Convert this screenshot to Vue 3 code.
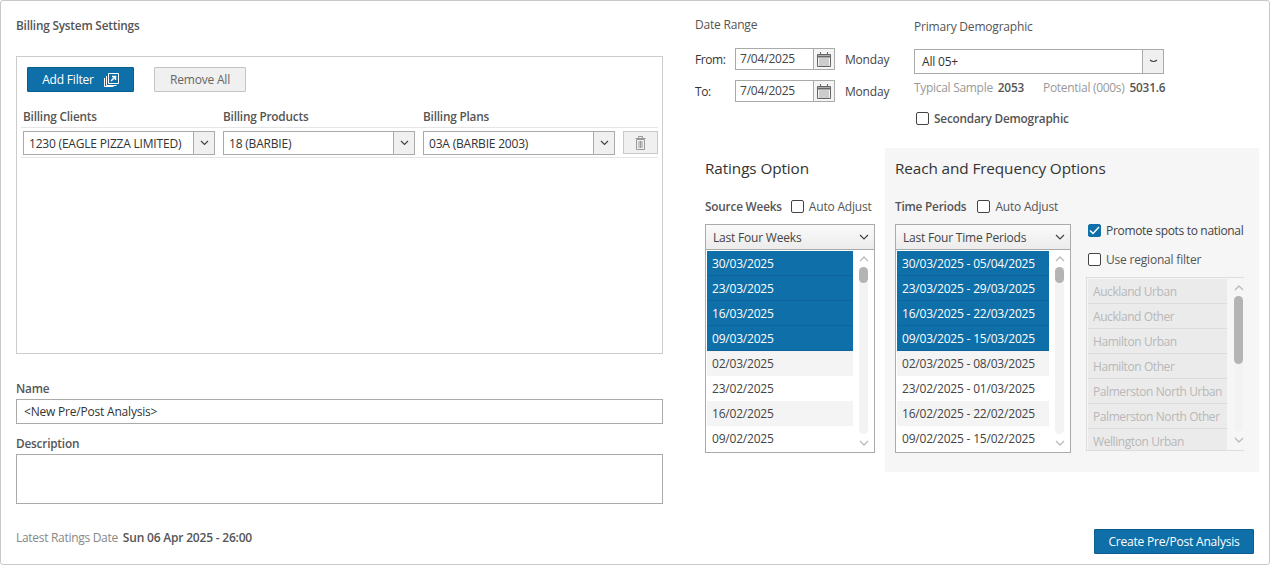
<script setup>
const filterCols = [
  { label: 'Billing Clients', value: '1230 (EAGLE PIZZA LIMITED)' },
  { label: 'Billing Products', value: '18 (BARBIE)' },
  { label: 'Billing Plans', value: '03A (BARBIE 2003)' },
]

const weeks = ['30/03/2025', '23/03/2025', '16/03/2025', '09/03/2025', '02/03/2025', '23/02/2025', '16/02/2025', '09/02/2025']

const periods = [
  '30/03/2025 - 05/04/2025',
  '23/03/2025 - 29/03/2025',
  '16/03/2025 - 22/03/2025',
  '09/03/2025 - 15/03/2025',
  '02/03/2025 - 08/03/2025',
  '23/02/2025 - 01/03/2025',
  '16/02/2025 - 22/02/2025',
  '09/02/2025 - 15/02/2025',
]

const regions = ['Auckland Urban', 'Auckland Other', 'Hamilton Urban', 'Hamilton Other', 'Palmerston North Urban', 'Palmerston North Other', 'Wellington Urban']

const dates = [
  { label: 'From:', value: '7/04/2025' },
  { label: 'To:', value: '7/04/2025' },
]
</script>

<template>
  <div class="page">
    <section class="left">
      <h2 class="title">Billing System Settings</h2>

      <div class="filter-box">
        <div class="filter-actions">
          <button class="btn btn-primary add-btn">
            Add Filter
            <svg width="15" height="14" viewBox="0 0 15 14" fill="none" stroke="#fff">
              <path d="M4.500 .5h10v10h-10z" />
              <path d="M2.500 3v9.500h10" />
              <path d="M.5 5v8.500h9" />
              <path d="M7 8l4-4M8 3.500h3.500V7" stroke-width="1.500" />
            </svg>
          </button>
          <button class="btn btn-muted">Remove All</button>
        </div>
        <div class="filter-labels">
          <div v-for="col in filterCols" :key="col.label" class="filter-label">{{ col.label }}</div>
        </div>
        <div class="filter-row">
          <div v-for="col in filterCols" :key="col.label" class="select filter-select">
            <span class="select-value">{{ col.value }}</span>
            <span class="select-arrow">
              <svg width="9" height="6" viewBox="0 0 9 6" fill="none" stroke="#444" stroke-width="1.200"><path d="M1 1l3.500 3.500L8 1" /></svg>
            </span>
          </div>
          <button class="trash-btn" aria-label="Delete">
            <svg width="11" height="14" viewBox="0 0 11 14" fill="none" stroke="#999">
              <path d="M1.500 3.500h8v10h-8zM.5 2.500h10M3.500 2V.5h4V2M4 5v7M5.500 5v7M7 5v7" />
            </svg>
          </button>
        </div>
      </div>

      <label class="field-label name-label">Name</label>
      <div class="text-input">&lt;New Pre/Post Analysis&gt;</div>
      <label class="field-label desc-label">Description</label>
      <div class="text-area"></div>

      <div class="latest">
        <span>Latest Ratings Date</span>
        <b>Sun 06 Apr 2025 - 26:00</b>
      </div>
    </section>

    <section class="right">
      <div class="top-row">
        <div class="date-range">
          <div class="plain-label">Date Range</div>
          <div v-for="d in dates" :key="d.label" class="date-row">
            <span class="date-label">{{ d.label }}</span>
            <div class="date-input">
              <span class="date-value">{{ d.value }}</span>
              <span class="date-icon">
                <svg width="14" height="15" viewBox="0 0 14 15" fill="none" stroke="#666">
                  <path d="M.5 2.500h13v12H.5z" />
                  <path d="M1 4.500h12" stroke-width="2" />
                  <path d="M3.500 0v3M10.500 0v3" />
                  <path d="M2.500 7h9M2.500 9h9M2.500 11h9M2.500 13h9" stroke-dasharray="1 1" stroke="#555" />
                </svg>
              </span>
            </div>
            <span class="weekday">Monday</span>
          </div>
        </div>

        <div class="demo">
          <div class="plain-label demo-title">Primary Demographic</div>
          <div class="select demo-select">
            <span class="select-value">All 05+</span>
            <span class="select-arrow">
              <svg width="9" height="5" viewBox="0 0 9 5" fill="none" stroke="#444" stroke-width="1.200"><path d="M1 1q3.500 3 7 0" /></svg>
            </span>
          </div>
          <div class="stats">
            <span class="stat-name">Typical Sample</span><b class="stat-val">2053</b>
            <span class="stat-name stat-second">Potential (000s)</span><b class="stat-val">5031.6</b>
          </div>
          <label class="check secondary">
            <span class="box"></span>
            <b>Secondary Demographic</b>
          </label>
        </div>
      </div>

      <div class="options">
        <div class="ratings">
          <h3 class="heading">Ratings Option</h3>
          <div class="list-head">
            <span class="list-title">Source Weeks</span>
            <label class="check"><span class="box"></span>Auto Adjust</label>
          </div>
          <div class="list-wrap weeks">
            <div class="list-drop">
              Last Four Weeks
              <svg width="10" height="6" viewBox="0 0 10 6" fill="none" stroke="#444" stroke-width="1.200"><path d="M1 1l4 4 4-4" /></svg>
            </div>
            <div class="list-body">
              <div class="rows">
                <div v-for="(w, i) in weeks" :key="w" class="row" :class="{ selected: i < 4, odd: i % 2 === 0 }">{{ w }}</div>
              </div>
              <div class="scroll">
                <svg class="scroll-chev" width="10" height="6" viewBox="0 0 10 6" fill="none" stroke="#bbb" stroke-width="1.300"><path d="M1 5l4-4 4 4" /></svg>
                <div class="track"><div class="thumb"></div></div>
                <svg class="scroll-chev" width="10" height="6" viewBox="0 0 10 6" fill="none" stroke="#bbb" stroke-width="1.300"><path d="M1 1l4 4 4-4" /></svg>
              </div>
            </div>
          </div>
        </div>

        <div class="reach">
          <h3 class="heading">Reach and Frequency Options</h3>
          <div class="reach-cols">
            <div>
              <div class="list-head">
                <span class="list-title">Time Periods</span>
                <label class="check"><span class="box"></span>Auto Adjust</label>
              </div>
              <div class="list-wrap periods">
                <div class="list-drop">
                  Last Four Time Periods
                  <svg width="10" height="6" viewBox="0 0 10 6" fill="none" stroke="#444" stroke-width="1.200"><path d="M1 1l4 4 4-4" /></svg>
                </div>
                <div class="list-body">
                  <div class="rows">
                    <div v-for="(p, i) in periods" :key="p" class="row" :class="{ selected: i < 4, odd: i % 2 === 0 }">{{ p }}</div>
                  </div>
                  <div class="scroll">
                    <svg class="scroll-chev" width="10" height="6" viewBox="0 0 10 6" fill="none" stroke="#bbb" stroke-width="1.300"><path d="M1 5l4-4 4 4" /></svg>
                    <div class="track"><div class="thumb"></div></div>
                    <svg class="scroll-chev" width="10" height="6" viewBox="0 0 10 6" fill="none" stroke="#bbb" stroke-width="1.300"><path d="M1 1l4 4 4-4" /></svg>
                  </div>
                </div>
              </div>
            </div>

            <div class="regional">
              <label class="check promote">
                <span class="box checked">
                  <svg width="11" height="9" viewBox="0 0 11 9" fill="none" stroke="#fff" stroke-width="1.500"><path d="M1 4.500l3 3 6-6.500" /></svg>
                </span>
                Promote spots to national
              </label>
              <label class="check use-filter"><span class="box"></span>Use regional filter</label>
              <div class="region-list">
                <div class="region-rows">
                  <div v-for="r in regions" :key="r" class="region">{{ r }}</div>
                </div>
                <div class="scroll region-scroll">
                  <svg class="scroll-chev" width="10" height="6" viewBox="0 0 10 6" fill="none" stroke="#bbb" stroke-width="1.300"><path d="M1 5l4-4 4 4" /></svg>
                  <div class="track"><div class="thumb big"></div></div>
                  <svg class="scroll-chev" width="10" height="6" viewBox="0 0 10 6" fill="none" stroke="#bbb" stroke-width="1.300"><path d="M1 1l4 4 4-4" /></svg>
                </div>
              </div>
            </div>
          </div>
        </div>
      </div>

      <div class="bottom">
        <button class="btn btn-primary create-btn">Create Pre/Post Analysis</button>
      </div>
    </section>
  </div>
</template>

<style scoped>
.page {
  box-sizing: border-box;
  display: flex;
  width: 1270px;
  height: 565px;
  border: 1px solid #c8c8c8;
  border-radius: 3px;
  background: #fff;
  color: #444;
  font-family: "Open Sans", "Noto Sans", "Liberation Sans", sans-serif;
  font-size: 12px;
  letter-spacing: -0.200px;
  overflow: hidden;
}

.left {
  width: 647px;
  margin-left: 15px;
}

.title {
  margin: 16px 0 0;
  height: 39px;
  font-size: 11.800px;
  line-height: 16px;
  font-weight: 600;
  color: #555;
}

.filter-box {
  box-sizing: border-box;
  height: 298px;
  border: 1px solid #ccc;
  padding: 10px 4px 0;
}

.filter-actions {
  display: flex;
  gap: 20px;
  padding-left: 6px;
}

.btn {
  box-sizing: border-box;
  height: 25px;
  font: inherit;
  letter-spacing: inherit;
  border-radius: 1px;
  padding: 0;
}

.btn-primary {
  background: #0f6fa9;
  border: 1px solid #0b5c8e;
  color: #fff;
}

.add-btn {
  display: flex;
  align-items: center;
  justify-content: center;
  gap: 10px;
  width: 107px;
}

.btn-muted {
  width: 92px;
  background: #f0f0f0;
  border: 1px solid #c4c4c4;
  color: #666;
}

.filter-labels {
  display: flex;
  gap: 8px;
  height: 36px;
  padding: 16px 0 0 2px;
  box-sizing: border-box;
  border-bottom: 1px solid #e6e6e6;
}

.filter-label {
  width: 192px;
  font-size: 11.800px;
  font-weight: 600;
  color: #555;
  line-height: 16px;
}

.filter-row {
  box-sizing: border-box;
  display: flex;
  align-items: flex-start;
  gap: 8px;
  height: 30px;
  padding: 3px 0 0 2px;
  border-bottom: 1px solid #e6e6e6;
}

.select {
  box-sizing: border-box;
  display: flex;
  align-items: stretch;
  height: 25px;
  border: 1px solid #aaa;
  background: #fff;
  color: #333;
}

.filter-select {
  width: 192px;
  height: 24px;
}

.select-value {
  flex: 1;
  padding-left: 5px;
  line-height: 23px;
  white-space: nowrap;
}

.select-arrow {
  display: flex;
  align-items: center;
  justify-content: center;
  width: 20px;
  border-left: 1px solid #aaa;
  background: #f0f0f0;
}

.trash-btn {
  box-sizing: border-box;
  display: flex;
  align-items: center;
  justify-content: center;
  width: 35px;
  height: 23px;
  padding: 0;
  background: #f0f0f0;
  border: 1px solid #c8c8c8;
}

.field-label {
  display: block;
  font-size: 11.800px;
  font-weight: 600;
  color: #555;
  line-height: 16px;
}

.name-label {
  margin-top: 26px;
}

.desc-label {
  margin-top: 11px;
}

.text-input {
  box-sizing: border-box;
  height: 25px;
  margin-top: 3px;
  padding-left: 7px;
  border: 1px solid #aaa;
  line-height: 23px;
  color: #333;
}

.text-area {
  box-sizing: border-box;
  height: 50px;
  margin-top: 3px;
  border: 1px solid #aaa;
}

.latest {
  display: flex;
  gap: 5px;
  margin-top: 26px;
  line-height: 16px;
  color: #888;
}

.latest span {
  letter-spacing: -0.300px;
}

.latest b {
  font-weight: 600;
  color: #555;
}

.right {
  position: relative;
  width: 575px;
  margin-left: 32px;
}

.top-row {
  display: flex;
  height: 147px;
}

.date-range {
  width: 219px;
  padding-top: 16px;
}

.plain-label {
  line-height: 16px;
  color: #555;
}

.date-row {
  display: flex;
  align-items: center;
  height: 22px;
  margin-top: 10px;
}

.plain-label + .date-row {
  margin-top: 15px;
}

.date-label {
  width: 40px;
  color: #333;
  letter-spacing: -0.400px;
}

.date-input {
  box-sizing: border-box;
  display: flex;
  width: 100px;
  height: 22px;
  border: 1px solid #aaa;
}

.date-value {
  flex: 1;
  padding-left: 4px;
  line-height: 19px;
  color: #444;
}

.date-icon {
  display: flex;
  align-items: center;
  justify-content: center;
  width: 20px;
  border-left: 1px solid #aaa;
  background: #f4f4f4;
}

.weekday {
  margin-left: 10px;
  color: #444;
}

.demo {
  width: 250px;
  padding-top: 18px;
}

.demo-select {
  margin-top: 14px;
  height: 25px;
}

.demo-select .select-value {
  padding-left: 7px;
}

.stats {
  display: flex;
  align-items: center;
  height: 16px;
  margin-top: 5px;
  white-space: nowrap;
}

.stat-name {
  color: #999;
  letter-spacing: -0.300px;
}

.stat-second {
  margin-left: 19px;
}

.stat-val {
  margin-left: 5px;
  font-size: 11.800px;
  font-weight: 600;
  color: #555;
}

.check {
  display: inline-flex;
  align-items: center;
  gap: 5px;
  color: #555;
  white-space: nowrap;
}

.secondary {
  margin: 15px 0 0 2px;
}

.secondary b {
  font-size: 11.800px;
  font-weight: 600;
  color: #555;
}

.box {
  box-sizing: border-box;
  display: flex;
  align-items: center;
  justify-content: center;
  flex: none;
  width: 13px;
  height: 13px;
  border: 1px solid #444;
  border-radius: 2px;
  background: #fff;
}

.box.checked {
  background: #0f6fa9;
  border-color: #0f6fa9;
}

.options {
  display: flex;
  gap: 10px;
  padding-left: 10px;
}

.ratings {
  width: 170px;
}

.ratings .list-title {
  margin-right: 9px;
}

.reach {
  box-sizing: border-box;
  width: 374px;
  height: 324px;
  padding: 0 10px;
  background: #f6f6f6;
}

.heading {
  margin: 0;
  height: 43px;
  padding-top: 8px;
  box-sizing: border-box;
  font-size: 15.300px;
  line-height: 24px;
  font-weight: 400;
  color: #333;
  letter-spacing: -0.100px;
}

.list-head {
  display: flex;
  align-items: center;
  height: 16px;
  margin-top: 7px;
}

.list-title {
  font-size: 11.800px;
  font-weight: 600;
  color: #555;
  margin-right: 11px;
}

.list-wrap {
  box-sizing: border-box;
  margin-top: 10px;
  height: 229px;
  border: 1px solid #aaa;
  background: #fff;
}

.weeks {
  width: 170px;
}

.periods {
  width: 176px;
}

.list-drop {
  box-sizing: border-box;
  display: flex;
  align-items: center;
  justify-content: space-between;
  height: 25px;
  padding: 0 5px 0 7px;
  border-bottom: 1px solid #aaa;
  background: linear-gradient(#fafafa, #ececec);
  color: #444;
}

.list-body {
  display: flex;
  padding: 1px 0 0 1px;
}

.rows {
  flex: 1;
  min-width: 0;
}

.row {
  box-sizing: border-box;
  height: 25px;
  padding-left: 5px;
  line-height: 25px;
  color: #444;
  white-space: nowrap;
}

.row.odd {
  background: #f4f4f4;
}

.row.selected {
  background: #0f6fa9;
  border-bottom: 1px solid #0d659b;
  color: #fff;
}

.scroll {
  display: flex;
  flex-direction: column;
  align-items: center;
  width: 21px;
  flex: none;
  height: 195px;
  padding-top: 5px;
  box-sizing: border-box;
}

.scroll-chev {
  flex: none;
}

.track {
  flex: 1;
  width: 9px;
  margin: 5px 0 6px;
  border-radius: 5px;
  background: #f3f3f3;
}

.thumb {
  height: 16px;
  border-radius: 5px;
  background: #b4b4b4;
}

.thumb.big {
  height: 68px;
}

.reach-cols {
  display: flex;
  gap: 15px;
}

.regional {
  display: flex;
  flex-direction: column;
  width: 165px;
  padding-top: 31px;
}

.promote {
  height: 16px;
  margin-left: 2px;
  color: #444;
  letter-spacing: -0.320px;
}

.use-filter {
  margin: 13px 0 0 2px;
  height: 16px;
}

.region-list {
  box-sizing: border-box;
  display: flex;
  width: 158px;
  height: 174px;
  margin-top: 10px;
  padding: 1px 0 0 1px;
  border: 1px solid #ddd;
  border-right: none;
  overflow: hidden;
}

.region-rows {
  width: 139px;
  flex: none;
  height: 171px;
  overflow: hidden;
}

.region {
  box-sizing: border-box;
  height: 25px;
  padding-left: 5px;
  line-height: 25px;
  border-bottom: 1px solid #dcdcdc;
  background: #ebebeb;
  color: #b8b8b8;
  white-space: nowrap;
  letter-spacing: -0.420px;
}

.region-scroll {
  flex: 1;
  width: auto;
  height: 164px;
  padding: 6px 0 0 6px;
}

.bottom {
  position: absolute;
  right: 15px;
  bottom: 10px;
}

.create-btn {
  width: 160px;
}
</style>

<style>
html,
body {
  margin: 0;
  background: #fff;
}
</style>
